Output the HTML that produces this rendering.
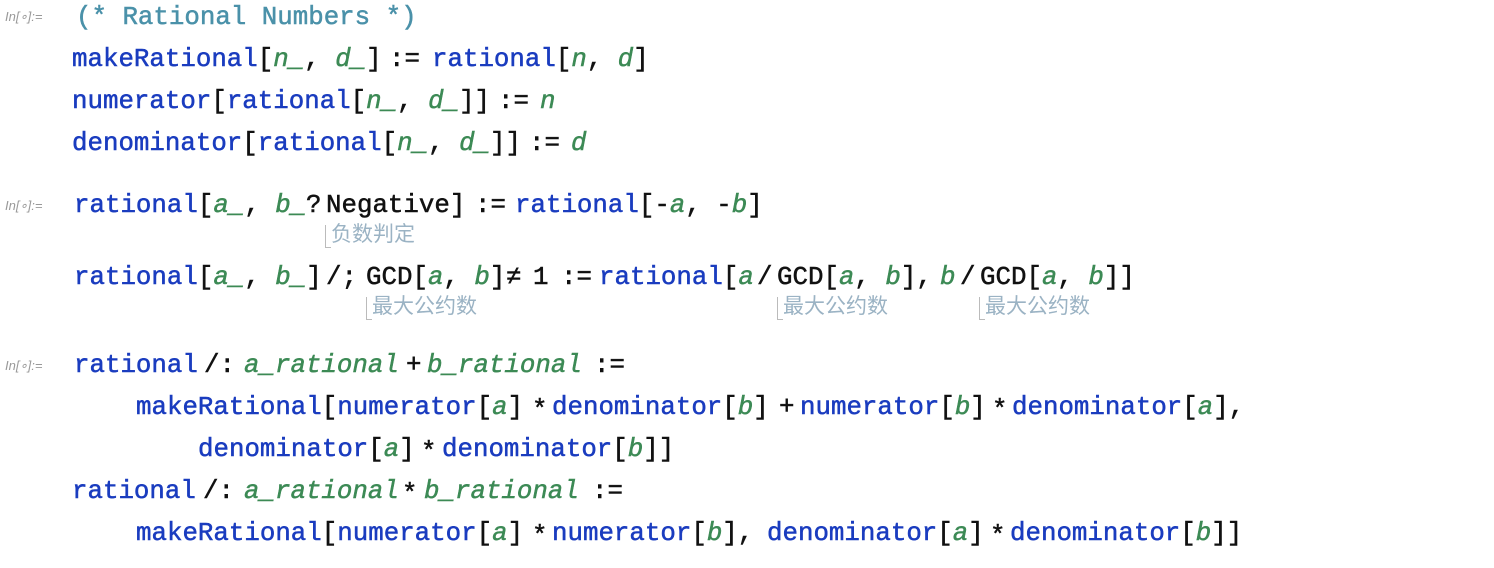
<!DOCTYPE html>
<html><head><meta charset="utf-8"><style>
body{margin:0;width:1494px;height:566px;background:#fff;position:relative;overflow:hidden;font-family:"Liberation Mono",monospace;font-size:25.8px;}
.w{position:absolute;left:0;top:2px;width:1494px;height:566px;}
.l{position:absolute;white-space:pre;line-height:30px;color:#111;-webkit-text-stroke:0.5px currentColor;}
.b{color:#1a3cbf;}
.g{color:#3c8a55;font-style:italic;}
.c{color:#4a91a9;}
.in{position:absolute;left:5px;font-family:"Liberation Sans",sans-serif;font-style:italic;font-size:13px;color:#999;}
.n{position:absolute;font-family:"Liberation Sans","Noto Sans CJK SC",sans-serif;font-size:21px;color:#9bb3c4;line-height:24px;}
.n:before{content:"";position:absolute;left:-6px;top:2px;width:5px;height:22px;border-left:1.5px solid #bbb;border-bottom:1.5px solid #bbb;}
</style></head><body><div class="w">
<div class="in" style="top:7px">In[∘]:=</div>
<div class="in" style="top:196px">In[∘]:=</div>
<div class="in" style="top:356px">In[∘]:=</div>

<div class="l c" style="left:76px;top:1px">(* Rational Numbers *)</div>

<div class="l" style="left:72px;top:43px"><span class="b">makeRational</span>[<span class="g">n_</span>, <span class="g">d_</span>]</div>
<div class="l" style="left:389px;top:43px">:=</div>
<div class="l" style="left:432px;top:43px"><span class="b">rational</span>[<span class="g">n</span>, <span class="g">d</span>]</div>

<div class="l" style="left:72px;top:85px"><span class="b">numerator</span>[<span class="b">rational</span>[<span class="g">n_</span>, <span class="g">d_</span>]]</div>
<div class="l" style="left:498px;top:85px">:=</div>
<div class="l" style="left:540px;top:85px"><span class="g">n</span></div>

<div class="l" style="left:72px;top:127px"><span class="b">denominator</span>[<span class="b">rational</span>[<span class="g">n_</span>, <span class="g">d_</span>]]</div>
<div class="l" style="left:529px;top:127px">:=</div>
<div class="l" style="left:571px;top:127px"><span class="g">d</span></div>

<div class="l" style="left:74px;top:189px"><span class="b">rational</span>[<span class="g">a_</span>, <span class="g">b_</span></div>
<div class="l" style="left:306px;top:189px">?</div>
<div class="l" style="left:326px;top:189px">Negative]</div>
<div class="l" style="left:475px;top:189px">:=</div>
<div class="l" style="left:515px;top:189px"><span class="b">rational</span>[-<span class="g">a</span>, -<span class="g">b</span>]</div>
<div class="n" style="left:331px;top:221px">负数判定</div>

<div class="l" style="left:74px;top:261px"><span class="b">rational</span>[<span class="g">a_</span>, <span class="g">b_</span>]</div>
<div class="l" style="left:326px;top:261px">/;</div>
<div class="l" style="left:366px;top:261px">GCD[<span class="g">a</span>, <span class="g">b</span>]</div>
<div class="l" style="left:506px;top:261px">≠</div>
<div class="l" style="left:533px;top:261px">1</div>
<div class="l" style="left:561px;top:261px">:=</div>
<div class="l" style="left:599px;top:261px"><span class="b">rational</span>[<span class="g">a</span></div>
<div class="l" style="left:757px;top:261px">/</div>
<div class="l" style="left:777px;top:261px">GCD[<span class="g">a</span>, <span class="g">b</span>],</div>
<div class="l" style="left:940px;top:261px"><span class="g">b</span></div>
<div class="l" style="left:960px;top:261px">/</div>
<div class="l" style="left:980px;top:261px">GCD[<span class="g">a</span>, <span class="g">b</span>]]</div>
<div class="n" style="left:372px;top:293px">最大公约数</div>
<div class="n" style="left:783px;top:293px">最大公约数</div>
<div class="n" style="left:985px;top:293px">最大公约数</div>

<div class="l" style="left:74px;top:349px"><span class="b">rational</span></div>
<div class="l" style="left:204px;top:349px">/:</div>
<div class="l" style="left:244px;top:349px"><span class="g">a_rational</span></div>
<div class="l" style="left:406px;top:349px">+</div>
<div class="l" style="left:427px;top:349px"><span class="g">b_rational</span></div>
<div class="l" style="left:594px;top:349px">:=</div>

<div class="l" style="left:136px;top:391px"><span class="b">makeRational</span>[<span class="b">numerator</span>[<span class="g">a</span>]</div>
<div class="l" style="left:532px;top:394px">*</div>
<div class="l" style="left:552px;top:391px"><span class="b">denominator</span>[<span class="g">b</span>]</div>
<div class="l" style="left:779px;top:391px">+</div>
<div class="l" style="left:800px;top:391px"><span class="b">numerator</span>[<span class="g">b</span>]</div>
<div class="l" style="left:992px;top:394px">*</div>
<div class="l" style="left:1012px;top:391px"><span class="b">denominator</span>[<span class="g">a</span>],</div>

<div class="l" style="left:198px;top:433px"><span class="b">denominator</span>[<span class="g">a</span>]</div>
<div class="l" style="left:421px;top:436px">*</div>
<div class="l" style="left:442px;top:433px"><span class="b">denominator</span>[<span class="g">b</span>]]</div>

<div class="l" style="left:72px;top:475px"><span class="b">rational</span></div>
<div class="l" style="left:203px;top:475px">/:</div>
<div class="l" style="left:244px;top:475px"><span class="g">a_rational</span></div>
<div class="l" style="left:402px;top:478px">*</div>
<div class="l" style="left:424px;top:475px"><span class="g">b_rational</span></div>
<div class="l" style="left:592px;top:475px">:=</div>

<div class="l" style="left:136px;top:517px"><span class="b">makeRational</span>[<span class="b">numerator</span>[<span class="g">a</span>]</div>
<div class="l" style="left:532px;top:520px">*</div>
<div class="l" style="left:552px;top:517px"><span class="b">numerator</span>[<span class="g">b</span>],</div>
<div class="l" style="left:767px;top:517px"><span class="b">denominator</span>[<span class="g">a</span>]</div>
<div class="l" style="left:990px;top:520px">*</div>
<div class="l" style="left:1010px;top:517px"><span class="b">denominator</span>[<span class="g">b</span>]]</div>
</div></body></html>
